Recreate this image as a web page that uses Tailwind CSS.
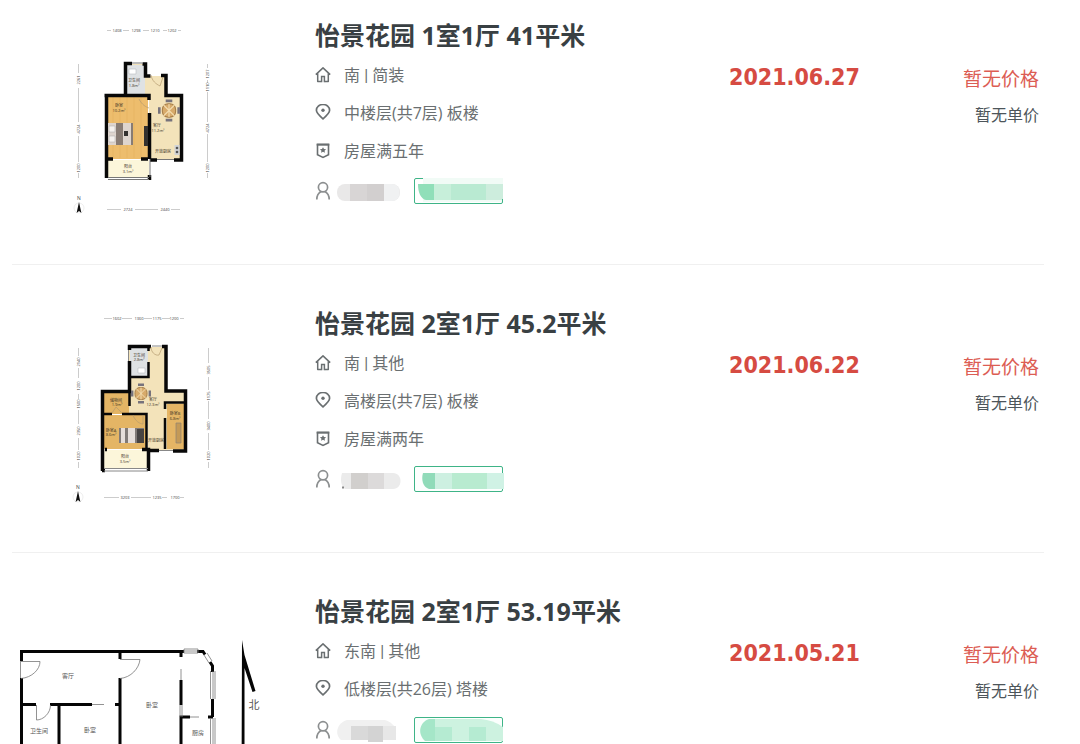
<!DOCTYPE html>
<html lang="zh-CN">
<head>
  <meta charset="UTF-8" />
  <meta name="viewport" content="width=device-width, initial-scale=1.0" />
  <title>怡景花园 成交记录</title>
  <script src="https://cdn.jsdelivr.net/npm/@tailwindcss/browser@4"></script>
</head>
<body class="bg-white font-['Open_Sans','Noto_Sans_CJK_SC',sans-serif] text-[#6a6f71]">
  <!-- 图标 -->
  <svg class="hidden" xmlns="http://www.w3.org/2000/svg">
    <symbol id="icon-house" viewBox="0 0 16 16">
      <path d="M.8 7.600 8 .9l7.200 6.700M2.700 6.500v8h3.500M13.300 6.500v8H9.800" fill="none" stroke="currentColor" stroke-width="1.500" stroke-linejoin="round" />
      <path d="M6.600 15.200V9.500h2.800v5.700" fill="none" stroke="currentColor" stroke-width="1.500" />
    </symbol>
    <symbol id="icon-pin" viewBox="0 0 16 16">
      <path d="M8 14.800C4 11.400 1.400 9 1.400 6.300a6.600 5.800 0 0 1 13.200 0C14.600 9 12 11.400 8 14.800Z" fill="none" stroke="currentColor" stroke-width="1.700" />
      <circle cx="8" cy="6.300" r="1.700" fill="currentColor" />
    </symbol>
    <symbol id="icon-badge" viewBox="0 0 16 16">
      <path d="M2.500 1.500h11v10.300L8 14.400l-5.500-2.600Z" fill="none" stroke="currentColor" stroke-width="1.600" />
      <path d="M1.700.6h12.600v2H1.700z" fill="currentColor" />
      <path d="m8 4.200 1 1.900 2.100.2-1.600 1.400.5 2.100-2-1-2 1 .5-2.100-1.600-1.400L7 6.100Z" fill="currentColor" />
    </symbol>
    <symbol id="icon-user" viewBox="0 0 16 20">
      <circle cx="8" cy="6.300" r="4.600" fill="none" stroke="currentColor" stroke-width="1.700" />
      <path d="M1.800 18.600c0-4 1.700-6.600 4.400-8M14.200 18.600c0-4-1.700-6.600-4.400-8" fill="none" stroke="currentColor" stroke-width="1.700" />
    </symbol>
    <symbol id="table-set" viewBox="0 0 20 20">
      <g fill="#77737c"><path d="M7 0h6v2.400H7zM7 17.600h6V20H7zM0 7h2.400v6H0zM17.600 7H20v6h-2.400z" /></g>
      <rect x="4" y="4" width="12" height="12" rx="5" fill="#d7aa6a" stroke="#a77f4a" />
      <path d="m5 5 10 10M15 5 5 15M10 4v12" stroke="#f3ddb0" stroke-width="1" />
    </symbol>
    <symbol id="compass" viewBox="0 0 12 18">
      <text x="6" y="4" text-anchor="middle" font-size="5" fill="#444">N</text>
      <circle cx="6" cy="12" r="5" fill="none" stroke="#ddd" stroke-width=".5" />
      <path d="M6 6 8.400 17 6 15 3.600 17Z" fill="#111" />
    </symbol>
  </svg>

  <main class="h-screen overflow-hidden pr-9 pl-3">
    <article class="flex border-b border-[#f0f0f0] pt-3 pb-12">
      <svg class="h-[204px] w-[280px] shrink-0" viewBox="12 12 280 204" role="img" aria-label="户型图">
        <g fill="none" stroke="#aaa" stroke-width=".6">
          <path d="M107 30.500h4M123 30.500h6M143 30.500h6M163 30.500h4M178 30.500h3M107 209.500h14M135 209.500h23M171 209.500h9" />
          <path d="M78.500 64v9M78.500 88v34M78.500 136v26M78.500 173v5M207.500 64v4M207.500 80v3M207.500 92v30M207.500 134v28M207.500 173v5" />
        </g>
        <g font-size="4" fill="#444" text-anchor="middle">
          <text x="117" y="32">1408</text><text x="136" y="32">1298</text><text x="155" y="32">1210</text><text x="172" y="32">1202</text>
          <text x="128" y="211">2724</text><text x="165" y="211">2440</text>
          <text transform="translate(80 80) rotate(-90)">2261</text><text transform="translate(80 129) rotate(-90)">4724</text><text transform="translate(80 168) rotate(-90)">1200</text>
          <text transform="translate(209 74) rotate(-90)">1207</text><text transform="translate(209 87) rotate(-90)">1110</text><text transform="translate(209 128) rotate(-90)">4724</text><text transform="translate(209 168) rotate(-90)">1200</text>
        </g>
        <path d="M126 64h20v12h19v20h16v63h-32V96h-23Z" fill="#f3e3ba" />
        <path d="M127 65h18v30h-18z" fill="#dfe2e4" />
        <path d="M107 97h41v62h-41z" fill="#edbd6d" />
        <path d="M107 160h42v17h-42z" fill="#fcf6da" />
        <path d="M113 97v61M120 97v61M127 97v61M134 97v61M141 97v61" stroke="#e2ad58" stroke-width=".5" />
        <g fill="none" stroke="#080808" stroke-width="3.500">
          <path d="M150.500 76h-5V64h-3M132 63.500h-6.500v32M161 75.500h5v20h15.500v64.500H174M157 160h-7M104.500 95.500H149V100M149.500 113v46M106.500 95v65M148 159h-7M107 159h6M106.500 158v20M149.500 175v5" />
        </g>
        <path d="M132 63h10M108 177.500h41M108 179.500h41M157 159.500h17M150 159v18" fill="none" stroke="#777" stroke-width="1" />
        <path d="M151 75c1 6 5 9 9 11l3-9M139 99c3 6 7 8 10 9" fill="none" stroke="#b49b70" stroke-width=".7" />
        <path d="M129 69h7v5h-7z" fill="#fff" stroke="#b9bcc0" stroke-width=".6" />
        <path d="M108 123h25v22h-25z" fill="#887c74" />
        <path d="M108 123h8v22h-8zM123 123h8v22h-8z" fill="#ded5ce" />
        <path d="M109 126h6v6h-6zM109 136h6v6h-6z" fill="#f5f1ed" stroke="#aaa" stroke-width=".5" />
        <path d="M124 131h4v5h-4zM144 126h4v20h-4z" fill="#33312f" />
        <path d="M174.500 145h5v10h-5z" fill="#d0d3d6" /><circle cx="177" cy="148" r="1.300" fill="#555" /><circle cx="177" cy="152" r="1.300" fill="#555" />
        <use href="#table-set" x="158" y="99" width="22" height="23" />
        <g font-size="4" fill="#3d3527" text-anchor="middle">
          <text x="134" y="82">卫生间</text><text x="134" y="87">1.8m²</text>
          <text x="119" y="107">卧室</text><text x="119" y="112">10.2m²</text>
          <text x="157" y="127">客厅</text><text x="158" y="132">11.2m²</text>
          <text x="163" y="153">开放厨房</text>
          <text x="128" y="168">阳台</text><text x="128" y="173">3.1m²</text>
        </g>
        <use href="#compass" x="73" y="196" width="12" height="18" />
      </svg>

      <div class="ml-[23px] min-w-0 flex-1">
        <h2 class="pt-1 pb-0.5 text-[25px] leading-[38px] font-bold whitespace-nowrap text-[#394043]"><a href="#">怡景花园 1室1厅 41平米</a></h2>
        <ul class="text-base">
          <li class="flex h-[38px] items-center gap-[13px]"><svg class="size-4"><use href="#icon-house" /></svg><span>南 <span class="font-['Roboto']">|</span> 简装</span></li>
          <li class="flex h-[38px] items-center gap-[13px]"><svg class="size-4 mb-0.5"><use href="#icon-pin" /></svg>中楼层(共7层) 板楼</li>
          <li class="flex h-[38px] items-center gap-[13px]"><svg class="size-4"><use href="#icon-badge" /></svg>房屋满五年</li>
          <li class="flex h-[42px] items-center gap-1.5">
            <svg class="h-5 w-4 text-[#8c8f90]"><use href="#icon-user" /></svg>
            <svg class="h-7 w-[167px]" viewBox="0 0 167 28">
              <rect x="0" y="7" width="63" height="17" rx="8" fill="#e9e8e8" />
              <path d="M13 7h17v17H13z" fill="#d8d5d5" /><path d="M30 7h17v17H30z" fill="#d2cfcf" /><path d="M47 7h8c10 0 10 17 0 17h-8z" fill="#f0f1f2" />
              <path d="M86 1h80v24H86z" fill="#f1fbf6" />
              <path d="M81 7h16v16h-8c-5-1-8-7-8-16z" fill="#90dfb9" />
              <path d="M97 7h17v16H97z" fill="#c7efda" /><path d="M114 7h35v16h-35z" fill="#b9ead2" /><path d="M149 7h17v16h-17z" fill="#cdeddd" />
              <path d="M86 1.500h-7q-1.500 0-1.500 1.500v22q0 1.500 1.500 1.500h85q1.500 0 1.500-1.500v-3" fill="none" stroke="#3eb487" />
            </svg>
          </li>
        </ul>
      </div>
      <time class="w-[180px] pt-12 font-['DejaVu_Sans_Condensed','DejaVu_Sans',sans-serif] text-[23px] leading-[34px] font-bold text-[#d64b42]" datetime="2021-06-27">2021.06.27</time>
      <div class="w-[135px] pt-12 pr-[5px] text-right">
        <p class="text-[19px] leading-[38px] text-[#dc5d54]">暂无价格</p>
        <p class="text-base leading-[34px] text-[#4d555a]">暂无单价</p>
      </div>
    </article>

    <article class="flex border-b border-[#f0f0f0] pt-[35px] pb-12">
      <svg class="h-[204px] w-[280px] shrink-0" viewBox="12 300 280 204" role="img" aria-label="户型图">
        <g fill="none" stroke="#aaa" stroke-width=".6">
          <path d="M104 318.500h8M122 318.500h10M144 318.500h8M162 318.500h8M180 318.500h4M104 497.500h15M131 497.500h20M162 497.500h5M180 497.500h4" />
          <path d="M78.500 348v8M78.500 368v10M78.500 394v5M78.500 410v14M78.500 438v12M78.500 462v6M208.500 348v15M208.500 377v13M208.500 401v18M208.500 433v17M208.500 462v6" />
        </g>
        <g font-size="4" fill="#444" text-anchor="middle">
          <text x="117" y="320">1602</text><text x="139" y="320">1360</text><text x="157" y="320">1175</text><text x="174" y="320">1200</text>
          <text x="125" y="499">3203</text><text x="157" y="499">1235</text><text x="175" y="499">1700</text>
          <text transform="translate(80 362) rotate(-90)">2140</text><text transform="translate(80 386) rotate(-90)">1200</text><text transform="translate(80 404) rotate(-90)">1500</text><text transform="translate(80 431) rotate(-90)">2350</text><text transform="translate(80 456) rotate(-90)">1020</text>
          <text transform="translate(210 370) rotate(-90)">3505</text><text transform="translate(210 396) rotate(-90)">1175</text><text transform="translate(210 426) rotate(-90)">3400</text><text transform="translate(210 456) rotate(-90)">1020</text>
        </g>
        <path d="M129 347h37v45h19v58h-37v-36h-19z" fill="#f3e3ba" />
        <path d="M130 348h18v28h-18z" fill="#dfe2e4" />
        <path d="M104 392h25v22h-25zM104 415h42v34h-42zM167 404h17v45h-17z" fill="#e4b565" />
        <path d="M104 450h43v19h-43z" fill="#fcf6da" />
        <g fill="none" stroke="#080808" stroke-width="3.500">
          <path d="M151 346.500h-21.500V350M129.500 361v30.500h-27V471M162 346.500h4v44.500h19.500v60H173M159 450.500h-11M105 449.500h2M142 449.500h6.500V471M102 470.500h3" />
          <path d="M148.500 347v4M148.500 362v15H130M104 414h8M122 414h24.500v34M165 449v-31M165 409v-6.500h20M129.500 392v14" stroke-width="2.500" />
        </g>
        <path d="M128.500 350v11M104 468.500h44M104 471h44M159 450.500h14M152 346h10" fill="none" stroke="#888" stroke-width="1" />
        <path d="M151 347c0 5 4 9 8 8l3-7M112 413l4-6 6 6M133 415c2 6 7 9 10 9v-9" fill="none" stroke="#b49b70" stroke-width=".7" />
        <path d="M138 368h7v5h-7z" fill="#fff" stroke="#b9bcc0" stroke-width=".6" />
        <path d="M119 428h25v15h-25z" fill="#817a77" />
        <path d="M121 428h4v15h-4zM128 428h7v15h-7z" fill="#e6deda" /><path d="M137 429h7v14h-7z" fill="#474342" />
        <path d="M176 423h5v20h-5z" fill="#c49a57" stroke="#8d8375" stroke-width=".7" />
        <use href="#table-set" x="131" y="383" width="20" height="21" />
        <g font-size="4" fill="#3d3527" text-anchor="middle">
          <text x="139" y="357">卫生间</text><text x="139" y="361">2.8m²</text>
          <text x="116" y="402">储物间</text><text x="117" y="406">1.9m²</text>
          <text x="153" y="401">客厅</text><text x="153" y="406">12.3m²</text>
          <text x="111" y="432">卧室A</text><text x="111" y="436">8.6m²</text>
          <text x="175" y="415">卧室B</text><text x="175" y="420">6.8m²</text>
          <text x="156" y="442">开放厨房</text>
          <text x="125" y="458">阳台</text><text x="125" y="463">3.5m²</text>
        </g>
        <use href="#compass" x="72" y="485" width="12" height="18" />
      </svg>

      <div class="ml-[23px] min-w-0 flex-1">
        <h2 class="pt-1 pb-0.5 text-[25px] leading-[38px] font-bold whitespace-nowrap text-[#394043]"><a href="#">怡景花园 2室1厅 45.2平米</a></h2>
        <ul class="text-base">
          <li class="flex h-[38px] items-center gap-[13px]"><svg class="size-4"><use href="#icon-house" /></svg><span>南 <span class="font-['Roboto']">|</span> 其他</span></li>
          <li class="flex h-[38px] items-center gap-[13px]"><svg class="size-4 mb-0.5"><use href="#icon-pin" /></svg>高楼层(共7层) 板楼</li>
          <li class="flex h-[38px] items-center gap-[13px]"><svg class="size-4"><use href="#icon-badge" /></svg>房屋满两年</li>
          <li class="flex h-[42px] items-center gap-1.5">
            <svg class="h-5 w-4 text-[#8c8f90]"><use href="#icon-user" /></svg>
            <svg class="h-7 w-[167px]" viewBox="0 0 167 28">
              <path d="M5 8h51c10 0 10 16 0 16H8c-4-3-5-9-3-16z" fill="#ebebeb" />
              <path d="M14 8h17v16H14z" fill="#d1cfcd" /><path d="M31 8h16v16H31z" fill="#dcdada" />
              <path d="M5 21.500h2v2H5z" fill="#888" />
              <rect x="77.500" y="1.500" width="88" height="25" rx="1.500" fill="#fdfffe" stroke="#3eb487" />
              <path d="M86 8h12v16h-6c-6-2-8-9-6-16z" fill="#90dbb9" />
              <path d="M98 8h17v16H98z" fill="#cdf0e1" /><path d="M115 8h35v16h-35z" fill="#b8ebd0" /><path d="M150 8h17v16h-17z" fill="#d0f2e5" />
            </svg>
          </li>
        </ul>
      </div>
      <time class="w-[180px] pt-12 font-['DejaVu_Sans_Condensed','DejaVu_Sans',sans-serif] text-[23px] leading-[34px] font-bold text-[#d64b42]" datetime="2021-06-22">2021.06.22</time>
      <div class="w-[135px] pt-12 pr-[5px] text-right">
        <p class="text-[19px] leading-[38px] text-[#dc5d54]">暂无价格</p>
        <p class="text-base leading-[34px] text-[#4d555a]">暂无单价</p>
      </div>
    </article>

    <article class="flex border-b border-[#f0f0f0] pt-[35px] pb-12">
      <svg class="h-[204px] w-[280px] shrink-0" viewBox="12 588 280 204" role="img" aria-label="户型图">
        <g fill="none" stroke="#050505" stroke-width="3">
          <path d="M21.500 661v-9.500H184M21.500 678v114M120 652v7M120 678v114M181 651v6M181 680v25M181 792v-75h9M208 717h5M22 704.500h14M50 704.500h42M115 704.500h5M59 704v88" />
          <path d="M197 651.500h6l2 3M210 662l2.500 4v6M212.500 699v18" />
        </g>
        <g fill="none" stroke="#777" stroke-width=".8">
          <path d="M184 649h14v4h-14zM184 651h14M204 655l5 8M207 653l5 8M210.500 671v28M213 671v28M215 671v28M210.500 718v74M213 718v74M215 718v74M181 669v11M180 705v12M182 705v12M92 704.500h12M190 717h9" />
          <path d="M21 661.500h19c0 8-8 16-19 17M20.500 661v17M120 659.500h20c-1 9-9 18-20 19M36.500 705v15c7 0 14-7 14-15" />
        </g>
        <path d="M242 640 244.500 655 255.500 691 252.500 692 244.500 668V792H241.500Z" fill="#050505" />
        <g font-size="6" fill="#555" text-anchor="middle">
          <text x="68" y="678">客厅</text><text x="152" y="707">卧室</text><text x="39" y="733">卫生间</text><text x="90" y="732">卧室</text><text x="198" y="735">厨房</text>
          <text x="254" y="709" font-size="11" font-family="Noto Sans CJK SC, sans-serif">北</text>
        </g>
      </svg>

      <div class="ml-[23px] min-w-0 flex-1">
        <h2 class="pt-1 pb-0.5 text-[25px] leading-[38px] font-bold whitespace-nowrap text-[#394043]"><a href="#">怡景花园 2室1厅 53.19平米</a></h2>
        <ul class="text-base">
          <li class="flex h-[38px] items-center gap-[13px]"><svg class="size-4"><use href="#icon-house" /></svg><span>东南 <span class="font-['Roboto']">|</span> 其他</span></li>
          <li class="flex h-[38px] items-center gap-[13px]"><svg class="size-4 mb-0.5"><use href="#icon-pin" /></svg>低楼层(共26层) 塔楼</li>
          <li class="flex h-[44px] items-center gap-1.5">
            <svg class="h-5 w-4 text-[#8c8f90]"><use href="#icon-user" /></svg>
            <svg class="h-7 w-[167px]" viewBox="0 0 167 28">
              <path d="M10 4h38c10 3 13 11 10 20H4C-3 18 0 7 10 4z" fill="#f0f0f0" />
              <path d="M14 10h17v14H14z" fill="#d9d9d9" /><path d="M31 10h15v16H31z" fill="#d3d3d3" /><path d="M46 10h13v14H46z" fill="#e7e7e7" />
              <rect x="77.500" y="1.500" width="88" height="25" rx="1.500" fill="#fbfffd" stroke="#3eb487" />
              <path d="M92 3h16v22H88c-7-6-7-18 4-22z" fill="#a5e6c8" />
              <path d="M98 3h46q12 1 22 8v14H98z" fill="#cdf2e0" /><path d="M98 11h17v14H98zM132 11h17v14h-17z" fill="#b5ebd2" />
            </svg>
          </li>
        </ul>
      </div>
      <time class="w-[180px] pt-12 font-['DejaVu_Sans_Condensed','DejaVu_Sans',sans-serif] text-[23px] leading-[34px] font-bold text-[#d64b42]" datetime="2021-05-21">2021.05.21</time>
      <div class="w-[135px] pt-12 pr-[5px] text-right">
        <p class="text-[19px] leading-[38px] text-[#dc5d54]">暂无价格</p>
        <p class="text-base leading-[34px] text-[#4d555a]">暂无单价</p>
      </div>
    </article>
  </main>
</body>
</html>
